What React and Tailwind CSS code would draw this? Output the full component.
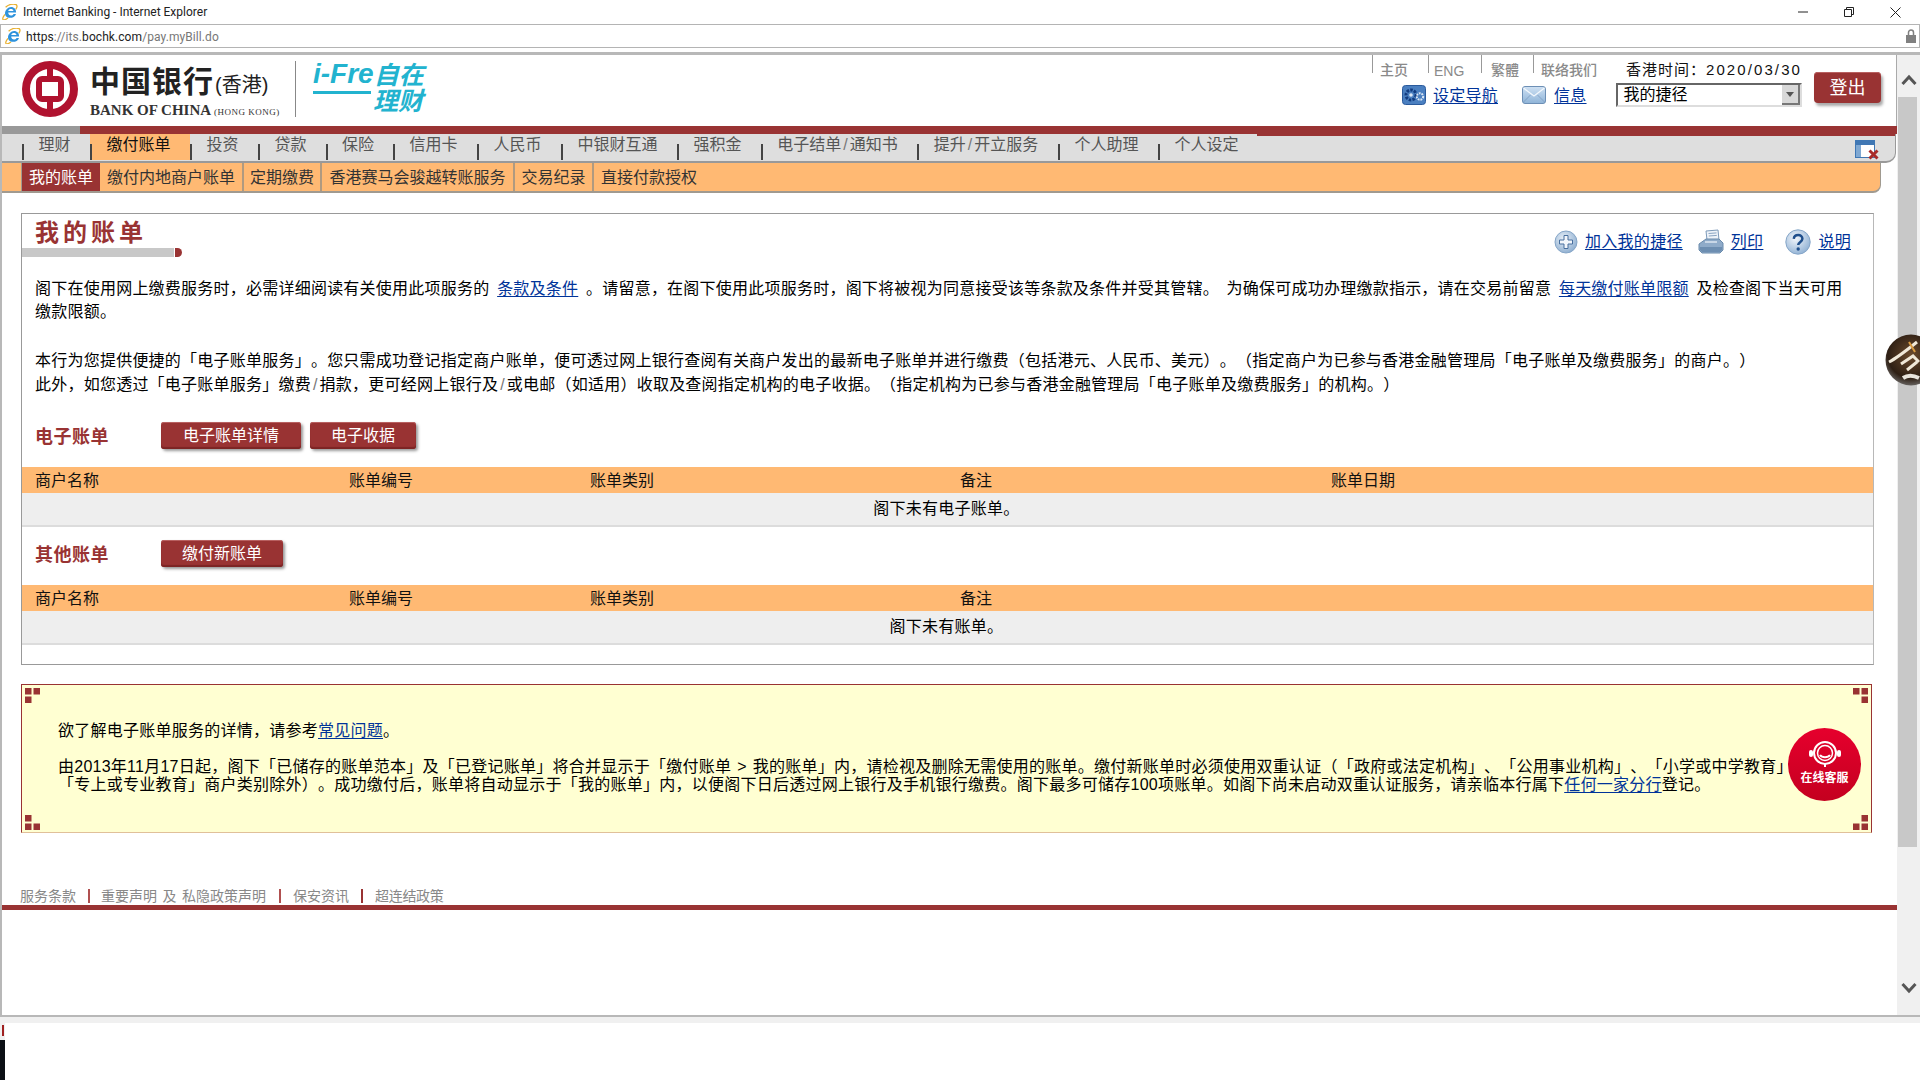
import React from "react";

const CJK = "font-['Liberation_Sans','Noto_Sans_CJK_SC',sans-serif]";
const linkCls = "text-[#003399] underline underline-offset-2";

function IEIcon({ className }) {
  return (
    <svg viewBox="0 0 16 16" className={className}>
      <path d="M3.600 3.200C6 .9 11-1 14.200.6c1.500 1 .6 3.300-.4 4.700M2.900 10.300C1.300 12.500.2 14.600 1 15.400c1 .9 3.500-.2 5-1.300" fill="none" stroke="#e8b030" strokeWidth="1.300" />
      <path d="M3 9.500C3 6 6 3 9 3c3.300 0 5.100 2.300 5.100 5.500H6.200c0 3.400 4.200 3.800 5.300 1.400h2.500C12.800 14 6.500 15 4 12.200 3.300 11.400 3 10.500 3 9.500zM6.300 6.900h5.100C11.200 4.300 6.700 4.300 6.300 6.900z" fill="#2f93dc" />
    </svg>
  );
}

function BocLogo() {
  return (
    <svg viewBox="0 0 56 56" className="w-[56px] h-[56px] shrink-0">
      <circle cx="28" cy="28" r="24" fill="none" stroke="#b0122f" strokeWidth="8" />
      <rect x="17" y="18" width="22" height="20" rx="3" fill="none" stroke="#b0122f" strokeWidth="6" />
      <rect x="25" y="2" width="6" height="15" fill="#b0122f" />
      <rect x="25" y="39" width="6" height="15" fill="#b0122f" />
    </svg>
  );
}

function GearIcon() {
  return (
    <svg viewBox="0 0 24 20" className="w-[24px] h-[20px]">
      <rect x="0.500" y="0.500" width="23" height="19" rx="3" fill="#4a7fc0" stroke="#2a5a9c" />
      <circle cx="9" cy="10" r="5" fill="none" stroke="#123c80" strokeWidth="3" strokeDasharray="2.500 1.200" />
      <circle cx="9" cy="10" r="1.800" fill="#dbe7f5" />
      <circle cx="18" cy="11.500" r="3.200" fill="none" stroke="#dbe7f5" strokeWidth="2" strokeDasharray="1.800 .900" />
    </svg>
  );
}

function MailIcon() {
  return (
    <svg viewBox="0 0 24 20" className="w-[24px] h-[20px]">
      <defs>
        <linearGradient id="mg" x1="0" y1="0" x2="0" y2="1">
          <stop offset="0" stopColor="#cfe1f3" />
          <stop offset="1" stopColor="#8fb4d8" />
        </linearGradient>
      </defs>
      <rect x="0.500" y="1.500" width="23" height="17" rx="2.500" fill="url(#mg)" stroke="#6d8fb5" />
      <path d="M1.500 3l10.500 8L22.500 3" fill="none" stroke="#f4f8fc" strokeWidth="1.200" />
      <path d="M1.500 17l7-7M22.500 17l-7-7" fill="none" stroke="#7c9cc0" strokeWidth=".800" />
    </svg>
  );
}

function PlusIcon() {
  return (
    <svg viewBox="0 0 24 24" className="w-[24px] h-[24px]">
      <defs>
        <radialGradient id="pg" cx=".4" cy=".35" r=".8">
          <stop offset="0" stopColor="#e8f0f8" />
          <stop offset="1" stopColor="#7fa3c9" />
        </radialGradient>
      </defs>
      <circle cx="12" cy="12" r="11" fill="url(#pg)" stroke="#86a6c8" />
      <path d="M10 5.500h4v4.500h4.500v4H14v4.500h-4V14H5.500v-4H10z" fill="#f2f6fb" stroke="#486f9e" strokeWidth="1" />
    </svg>
  );
}

function PrinterIcon() {
  return (
    <svg viewBox="0 0 26 26" className="w-[26px] h-[26px]">
      <path d="M8 2l12-1 1 10H9z" fill="#eef3f9" stroke="#7d9ab9" />
      <path d="M10.500 4.500l8-.6M10.800 7l8-.6" stroke="#8aa5c2" strokeWidth="1" />
      <path d="M1 15l7-5h13l4 4v7l-3 3H4l-3-3z" fill="#8fabc9" stroke="#6b8bac" />
      <path d="M2 18h22v3l-2 2H4l-2-2z" fill="#6d8eb1" />
      <path d="M7 13h12" stroke="#dce6f1" strokeWidth="1.500" />
    </svg>
  );
}

function HelpIcon() {
  return (
    <svg viewBox="0 0 26 26" className="w-[26px] h-[26px]">
      <defs>
        <radialGradient id="hg" cx=".4" cy=".35" r=".85">
          <stop offset="0" stopColor="#f2f6fb" />
          <stop offset="1" stopColor="#79a1cb" />
        </radialGradient>
      </defs>
      <circle cx="13" cy="13" r="12.200" fill="url(#hg)" stroke="#86a6c8" />
      <path d="M8.800 9.800c.4-5 8.600-5 8.600 0 0 3.200-4.200 3-4.200 6.300" fill="none" stroke="#1f4f8c" strokeWidth="2.500" />
      <circle cx="13.200" cy="20" r="1.700" fill="#1f4f8c" />
    </svg>
  );
}

function CloseWinIcon() {
  return (
    <svg viewBox="0 0 24 20" className="w-[24px] h-[20px]">
      <rect x="0.500" y="0.500" width="19" height="17" fill="#ffffff" stroke="#3f77b4" />
      <rect x="1" y="1" width="18" height="4" fill="#3f77b4" />
      <rect x="1" y="5" width="5" height="12" fill="#7fa8d2" />
      <path d="M14.500 10.500l8 8M22.500 10.500l-8 8" stroke="#a82a2a" strokeWidth="3" />
    </svg>
  );
}

function Corner({ className, flipX, flipY }) {
  const sx = flipX ? -1 : 1;
  const sy = flipY ? -1 : 1;
  return (
    <svg viewBox="0 0 15 15" className={className}>
      <g transform={`translate(${flipX ? 15 : 0} ${flipY ? 15 : 0}) scale(${sx} ${sy})`} fill="#993333">
        <rect x="0" y="0" width="6.500" height="6.500" />
        <rect x="8.500" y="0" width="6.500" height="6.500" />
        <rect x="0" y="8.500" width="6.500" height="6.500" />
      </g>
    </svg>
  );
}

function RedBtn({ children, className }) {
  return (
    <button className={`h-[27px] bg-[#993333] text-white text-[16px] leading-[26px] rounded-[3px] shadow-[inset_0_1px_0_#b86060,inset_0_-2px_1px_#7c2424,2px_2px_3px_#999999] ${className}`}>
      {children}
    </button>
  );
}

function Slash({ className }) {
  return <span className={`mx-[2px] ${className || "text-[#777777]"}`}>/</span>;
}

const tabs = [
  ["理财", "w-[68px]"],
  ["缴付账单", "w-[100px]", true],
  ["投资", "w-[68px]"],
  ["贷款", "w-[68px]"],
  ["保险", "w-[67px]"],
  ["信用卡", "w-[84px]"],
  ["人民币", "w-[84px]"],
  ["中银财互通", "w-[116px]"],
  ["强积金", "w-[84px]"],
  [<>电子结单<Slash />通知书</>, "w-[156px]"],
  [<>提升<Slash />开立服务</>, "w-[141px]"],
  ["个人助理", "w-[100px]"],
  ["个人设定", "w-[100px]"],
];

const subs = [
  ["缴付内地商户账单", "w-[144px]"],
  ["定期缴费", "w-[78px]"],
  ["香港赛马会骏越转账服务", "w-[193px]"],
  ["交易纪录", "w-[79px]"],
];

function BillTable({ message, lastCol }) {
  return (
    <div>
      <div className="h-[26px] bg-[#ffb973] grid grid-cols-[314px_241px_370px_371px_1fr] pl-[13px] leading-[28px] text-[16px] text-[#111111]">
        <div>商户名称</div>
        <div>账单编号</div>
        <div>账单类别</div>
        <div>备注</div>
        <div>{lastCol}</div>
      </div>
      <div className="h-[34px] bg-[#eeeeee] border-b-2 border-[#dcdcdc] text-center leading-[32px] text-[16px] tracking-[0.25px] pr-[2px]">{message}</div>
    </div>
  );
}

export default function App() {
  return (
    <div className={`relative w-[1920px] h-[1080px] overflow-hidden bg-white text-black ${CJK} [text-spacing-trim:space-all]`}>
      {/* title bar */}
      <div className="h-[24px] flex items-center pl-[2px] font-['Roboto',sans-serif] text-[12px] text-[#222222]">
        <IEIcon className="w-[16px] h-[16px]" />
        <span className="ml-[5px]">Internet Banking - Internet Explorer</span>
        <div className="ml-auto flex items-center pr-[19px] gap-[36px]">
          <svg viewBox="0 0 10 10" className="w-[10px] h-[10px]"><path d="M0 5h10" stroke="#222222" /></svg>
          <svg viewBox="0 0 10 10" className="w-[10px] h-[10px]"><path d="M.5 2.500h7v7h-7zM2.500 2.500v-2h7v7h-2" fill="none" stroke="#222222" /></svg>
          <svg viewBox="0 0 11 11" className="w-[11px] h-[11px]"><path d="M.5.500l10 10M10.500.500l-10 10" stroke="#222222" /></svg>
        </div>
      </div>
      {/* address bar */}
      <div className="h-[24px] flex items-center border border-[#b4b4b4] pl-[4px] pr-[3px] font-['Roboto',sans-serif] text-[12px] text-[#777777]">
        <IEIcon className="w-[16px] h-[16px]" />
        <span className="ml-[5px] pt-[1px] tracking-[0.08px]"><span className="text-[#222222]">https</span>://its.<span className="text-[#222222]">bochk.com</span>/pay.myBill.do</span>
        <svg viewBox="0 0 10 14" className="ml-auto w-[10px] h-[14px]">
          <path d="M2.500 6V3.500a2.500 2.500 0 015 0V6" fill="none" stroke="#808080" strokeWidth="1.500" />
          <rect x="0" y="6" width="10" height="8" fill="#808080" />
        </svg>
      </div>
      <div className="h-[4px]" />

      {/* browser frame */}
      <div className="h-[965px] flex border-t-[3px] border-b-[2px] border-[#b8b8b8]">
        <div className="w-[2px] bg-[#b8b8b8]" />
        <div className="w-[1895px] flex flex-col">
          {/* header */}
          <div className="h-[71px] flex justify-between border-r border-[#aaaaaa]">
            <div className="flex pl-[20px] pt-[6px]">
              <BocLogo />
              <div className="ml-[12px] w-[190px]">
                <div className="flex items-end h-[36px] leading-none text-[#222222] font-bold">
                  <span className="text-[30px] tracking-[1px]">中国银行</span>
                  <span className="text-[20px] font-normal ml-[1px] mb-[2px]">(香港)</span>
                </div>
                <div className="mt-[5px] font-['Liberation_Serif',serif] text-[#333333] font-bold text-[15px] leading-[16px] whitespace-nowrap">
                  BANK OF CHINA <span className="text-[9px] font-normal tracking-[0.5px]">(HONG KONG)</span>
                </div>
              </div>
              <div className="w-px h-[56px] bg-[#888888] ml-[15px]" />
              <div className="ml-[17px] w-[116px] text-[#22b3cf] font-bold italic leading-none">
                <div className="flex items-end h-[27px] whitespace-nowrap">
                  <span className="font-['Liberation_Sans',sans-serif] text-[28px]">i-Fre</span>
                  <span className="text-[25px]">自在</span>
                </div>
                <div className="flex items-start mt-[1px]">
                  <span className="block w-[58px] h-[3px] bg-[#22b3cf] mt-[2px]" />
                  <span className="text-[25px] ml-[2px] whitespace-nowrap">理财</span>
                </div>
              </div>
            </div>

            <div className="flex pr-[15px]">
              <div className="w-[430px]">
                <div className="h-[23px] flex text-[14px] leading-[18px] text-[#8a8a8a] font-medium">
                  <div className="w-[56px] h-[18px] border-l border-[#999999] pl-[7px] pt-[6px]">主页</div>
                  <div className="w-[53px] h-[18px] border-l border-[#999999] pl-[5px] pt-[7px] font-['Liberation_Sans',sans-serif]">ENG</div>
                  <div className="w-[52px] h-[18px] border-l border-[#999999] pl-[9px] pt-[6px]">繁體</div>
                  <div className="w-[76px] h-[18px] border-l border-[#999999] pl-[7px] pt-[6px] whitespace-nowrap">联络我们</div>
                  <div className="ml-[17px] pt-[6px] text-[#111111] text-[15px] tracking-[1px] font-normal whitespace-nowrap">香港时间：<span className="tracking-[2.100px]">2020/03/30</span></div>
                </div>
                <div className="mt-[5px] h-[24px] flex items-center text-[16px]">
                  <div className="ml-[30px]"><GearIcon /></div>
                  <a className={`ml-[7px] pt-[2px] tracking-[0.25px] ${linkCls}`}>设定导航</a>
                  <div className="ml-[24px]"><MailIcon /></div>
                  <a className={`ml-[8px] pt-[2px] tracking-[0.25px] ${linkCls}`}>信息</a>
                  <div className="ml-[29px] w-[186px] h-[24px] flex items-center border-2 border-t-[#666666] border-l-[#666666] border-r-[#dddddd] border-b-[#dddddd] bg-white">
                    <span className="pl-[6px] flex-1 leading-[22px]">我的捷径</span>
                    <div className="w-[18px] h-[20px] bg-[#d8d8d8] flex items-center justify-center border-r-2 border-b-2 border-[#777777]">
                      <svg viewBox="0 0 8 5" className="w-[8px] h-[5px]"><path d="M0 0h8L4 5z" fill="#555555" /></svg>
                    </div>
                  </div>
                </div>
              </div>
              <button className="ml-[12px] mt-[17px] w-[67px] h-[31px] bg-[#993333] text-white text-[18px] leading-[33px] rounded-[4px] shadow-[inset_0_1px_0_#b86060,2px_3px_3px_#aaaaaa]">登出</button>
            </div>
          </div>

          {/* red strip */}
          <div className="h-[8px] flex">
            <div className="w-[78px] bg-[#999999]" />
            <div className="flex-1 bg-[#993333]" />
          </div>
          {/* nav */}
          <div className="h-[29px] w-[1894px] bg-[#dedede] border-r border-b-2 border-[#999999] rounded-br-[10px] flex pl-[20px] text-[16px] text-[#555555] relative">
            <span className="absolute left-[1255px] right-0 top-0 h-[2px] bg-[#993333]" />
            {tabs.map(([t, w, active], i) => (
              <div key={i} className={`${w} relative h-[26px] text-center leading-[21px] pr-[3px] ${active ? "bg-[#ffb973] text-[#111111]" : ""}`}>
                <span className="absolute left-0 top-[10px] w-[2px] h-[16px] bg-[#444444]" />
                {t}
              </div>
            ))}
            <div className="ml-auto mr-[16px] mt-[6px]"><CloseWinIcon /></div>
          </div>
          {/* sub nav */}
          <div className="h-[30px] w-[1879px] bg-[#ffb973] border-b-2 border-r border-[#a09a90] rounded-br-[8px] flex pl-[19px] text-[16px] text-[#333333] leading-[30px]">
            <div className="w-[79px] text-center bg-[#993333] text-white border-l border-[#a09a90]">我的账单</div>
            {subs.map(([s, w]) => (
              <div key={s} className={`${w} text-center border-r-2 border-[#b09a80] whitespace-nowrap`}>{s}</div>
            ))}
            <div className="px-[7px] whitespace-nowrap">直接付款授权</div>
          </div>

          {/* main box */}
          <div className="mt-[20px] ml-[19px] w-[1853px] h-[452px] border border-[#999999] border-r-[#b8b8b8] flex flex-col">
            <div className="flex justify-between">
              <div>
                <div className="h-[34px] pl-[13px] pt-[4px] text-[24px] leading-[30px] font-bold text-[#993333] tracking-[4px]">我的账单</div>
                <div className="flex items-center">
                  <div className="w-[152px] h-[9px] bg-[#c8c8c8]" />
                  <div className="ml-[1px] w-[7px] h-[9px] bg-[#993333] rounded-r-full" />
                </div>
              </div>
              <div className="flex items-center h-[24px] mt-[16px] pr-[22px] text-[16px] tracking-[0.3px]">
                <PlusIcon />
                <a className={`ml-[7px] ${linkCls}`}>加入我的捷径</a>
                <div className="ml-[15px]"><PrinterIcon /></div>
                <a className={`ml-[7px] ${linkCls}`}>列印</a>
                <div className="ml-[22px]"><HelpIcon /></div>
                <a className={`ml-[7px] ${linkCls}`}>说明</a>
              </div>
            </div>

            <div className="mt-[20px] pl-[13px] text-[16px] leading-[24px] tracking-[0.23px] whitespace-nowrap">
              <div>
                阁下在使用网上缴费服务时，必需详细阅读有关使用此项服务的 <a className={`mx-[3px] ${linkCls}`}>条款及条件</a> 。请留意，在阁下使用此项服务时，阁下将被视为同意接受该等条款及条件并受其管辖。 <span className="ml-[3px]">为确保可成功办理缴款指示，请在交易前留意</span> <a className={`mx-[3px] ${linkCls}`}>每天缴付账单限额</a> 及检查阁下当天可用
              </div>
              <div className="-mt-[1px]">缴款限额。</div>
              <div className="mt-[25px]">本行为您提供便捷的「电子账单服务」。您只需成功登记指定商户账单，便可透过网上银行查阅有关商户发出的最新电子账单并进行缴费（包括港元、人民币、美元）。（指定商户为已参与香港金融管理局「电子账单及缴费服务」的商户。）</div>
              <div>此外，如您透过「电子账单服务」缴费<Slash />捐款，更可经网上银行及<Slash />或电邮（如适用）收取及查阅指定机构的电子收据。（指定机构为已参与香港金融管理局「电子账单及缴费服务」的机构。）</div>
            </div>

            <div className="mt-[25px] flex items-center pl-[13px]">
              <div className="w-[126px] mt-[3px] text-[18px] leading-[24px] font-bold text-[#993333] tracking-[0.5px]">电子账单</div>
              <RedBtn className="w-[140px]">电子账单详情</RedBtn>
              <RedBtn className="w-[106px] ml-[9px]">电子收据</RedBtn>
            </div>
            <div className="mt-[18px]"><BillTable message="阁下未有电子账单。" lastCol="账单日期" /></div>

            <div className="mt-[13px] flex items-center pl-[13px]">
              <div className="w-[126px] mt-[3px] text-[18px] leading-[24px] font-bold text-[#993333] tracking-[0.5px]">其他账单</div>
              <RedBtn className="w-[122px]">缴付新账单</RedBtn>
            </div>
            <div className="mt-[18px]"><BillTable message="阁下未有账单。" lastCol="" /></div>
          </div>

          {/* notice */}
          <div className="relative mt-[19px] ml-[19px] w-[1851px] h-[149px] bg-[#ffffd2] border border-[#993333] border-b-[#e0c09a] pl-[36px] pt-[37px] text-[16px] leading-[18px] tracking-[0.25px] whitespace-nowrap">
            <Corner className="absolute top-[3px] left-[3px] w-[15px] h-[15px]" />
            <Corner className="absolute top-[3px] right-[3px] w-[15px] h-[15px]" flipX />
            <Corner className="absolute bottom-[2px] left-[3px] w-[15px] h-[15px]" flipY />
            <Corner className="absolute bottom-[2px] right-[3px] w-[15px] h-[15px]" flipX flipY />
            <div>欲了解电子账单服务的详情，请参考<a className={linkCls}>常见问题</a>。</div>
            <div className="mt-[18px]">由2013年11月17日起，阁下「已储存的账单范本」及「已登记账单」将合并显示于「缴付账单<span className="mx-[6px]">&gt;</span>我的账单」内，请检视及删除无需使用的账单。缴付新账单时必须使用双重认证（「政府或法定机构」、「公用事业机构」、「小学或中学教育」</div>
            <div>「专上或专业教育」商户类别除外）。成功缴付后，账单将自动显示于「我的账单」内，以便阁下日后透过网上银行及手机银行缴费。阁下最多可储存100项账单。如阁下尚未启动双重认证服务，请亲临本行属下<a className={linkCls}>任何一家分行</a>登记。</div>
          </div>

          {/* footer */}
          <div className="mt-[54px] h-[18px] flex items-center pl-[18px] text-[14px] text-[#888888] whitespace-nowrap">
            <span>服务条款</span>
            <span className="ml-[12px] mr-[11px] w-[2px] h-[14px] bg-[#b05050]" />
            <span className="[word-spacing:1.600px]">重要声明 及 私隐政策声明</span>
            <span className="ml-[13px] mr-[12px] w-[2px] h-[14px] bg-[#b05050]" />
            <span>保安资讯</span>
            <span className="ml-[12px] mr-[12px] w-[2px] h-[14px] bg-[#993333]" />
            <span className="tracking-[-0.3px]">超连结政策</span>
          </div>
          <div className="h-[5px] bg-[#993333]" />
        </div>

        {/* scrollbar */}
        <div className="w-[23px] bg-[#f0f0f0] flex flex-col">
          <div className="h-[42px] flex justify-center pt-[19px]">
            <svg viewBox="0 0 16 12" className="w-[16px] h-[12px]"><path d="M1.500 10L8 3l6.500 7" fill="none" stroke="#555555" strokeWidth="3" /></svg>
          </div>
          <div className="ml-[1px] w-[19px] h-[750px] bg-[#c8c8c8]" />
          <div className="flex-1 flex flex-col justify-end pb-[21px] items-center">
            <svg viewBox="0 0 16 12" className="w-[16px] h-[12px]"><path d="M1.500 2L8 9l6.500-7" fill="none" stroke="#555555" strokeWidth="3" /></svg>
          </div>
        </div>
      </div>

      {/* status strip */}
      <div className="h-[6px] bg-[#f0f0f0]" />
      <div className="w-[5px] h-[17px] bg-[#f0f0f0] pt-[2px] pl-[2px]">
        <div className="w-[2px] h-[11px] bg-[#a02020]" />
      </div>
      <div className="w-[5px] h-[40px] bg-[#0b0f14]" />

      {/* floating ball */}
      <svg viewBox="0 0 52 52" className="absolute left-[1885px] top-[334px] w-[52px] h-[52px]">
        <defs>
          <radialGradient id="ball" cx=".5" cy=".4" r=".65">
            <stop offset="0" stopColor="#6b4a2c" />
            <stop offset=".7" stopColor="#2e1f14" />
            <stop offset="1" stopColor="#777777" />
          </radialGradient>
        </defs>
        <circle cx="26" cy="26" r="25.500" fill="url(#ball)" />
        <path d="M4 28C12 24 22 16 32 8" fill="none" stroke="#f0e8d8" strokeWidth="3" />
        <path d="M16 30l12-8 6 6M22 36l10-8" fill="none" stroke="#f0e8d8" strokeWidth="3" />
        <path d="M18 44c6-4 12-2 16 0" fill="none" stroke="#e8e4dc" strokeWidth="4" />
        <path d="M24 8l6 10" stroke="#d89a40" strokeWidth="2" />
      </svg>

      {/* online service badge */}
      <div className="absolute left-[1788px] top-[728px] w-[73px] h-[73px] rounded-full bg-gradient-to-b from-[#e6002d] to-[#c4001f] flex flex-col items-center pt-[12px]">
        <svg viewBox="0 0 36 30" className="w-[36px] h-[30px]">
          <circle cx="18" cy="13" r="11" fill="none" stroke="#ffffff" strokeWidth="2" />
          <circle cx="18" cy="13" r="7.500" fill="none" stroke="#ffffff" strokeWidth="1.500" />
          <rect x="2" y="10" width="4" height="7" rx="2" fill="#ffffff" />
          <rect x="30" y="10" width="4" height="7" rx="2" fill="#ffffff" />
          <path d="M13 15c2 3 8 3 10 0" fill="none" stroke="#ffffff" strokeWidth="2" />
          <path d="M18 24v3" stroke="#ffffff" strokeWidth="2" />
        </svg>
        <div className="mt-[1px] text-white text-[12px] font-bold leading-[14px] whitespace-nowrap">在线客服</div>
      </div>
    </div>
  );
}
